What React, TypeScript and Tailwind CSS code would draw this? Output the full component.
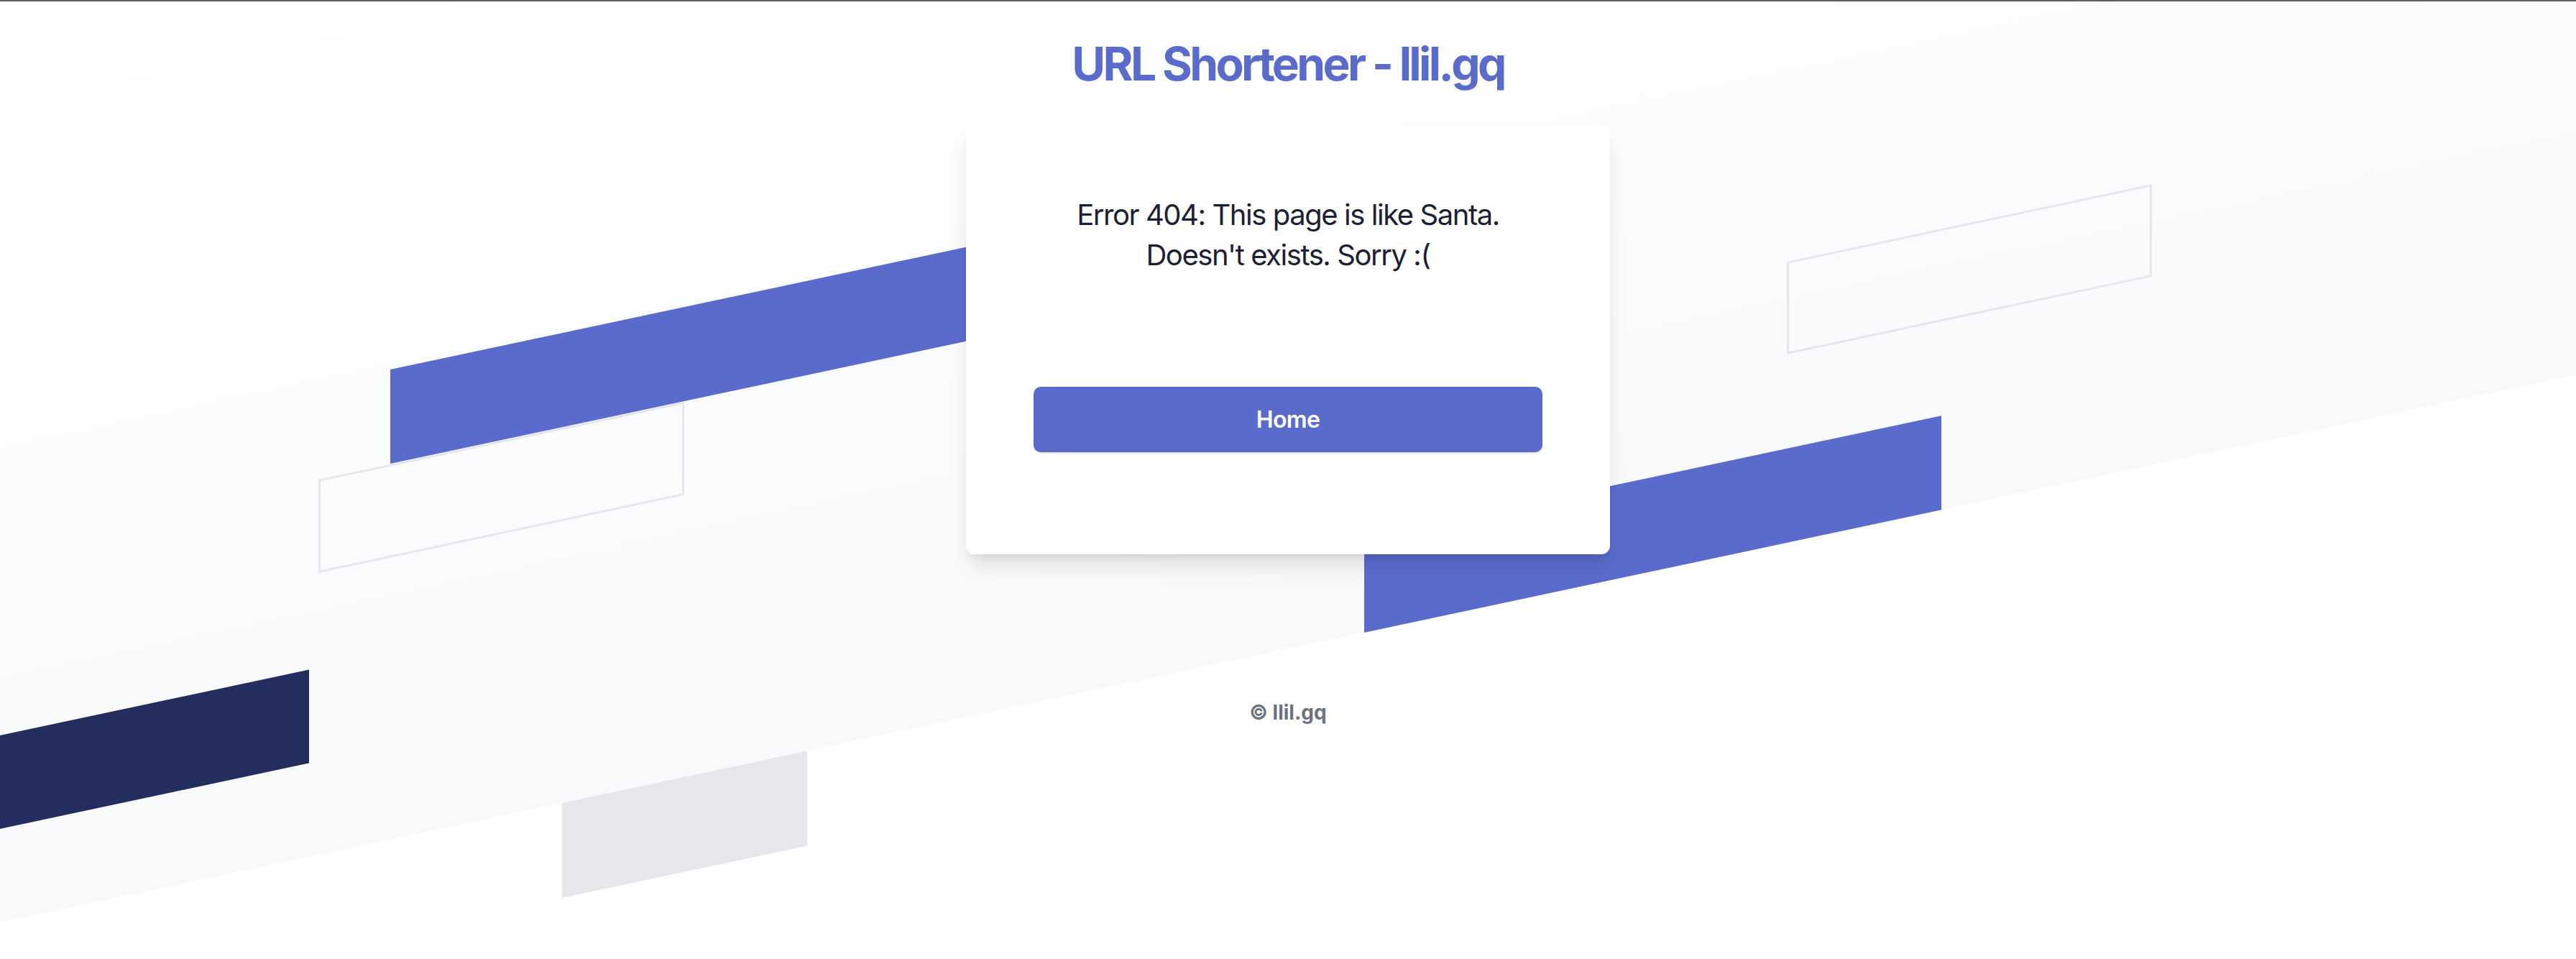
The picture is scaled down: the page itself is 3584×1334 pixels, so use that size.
function Backdrop() {
    return (
        <div className="pointer-events-none absolute inset-0">
            <div className="absolute left-0 top-0 h-[1283px] w-[3584px] origin-top-left -skew-y-12 bg-linear-to-b from-white to-[#f8f9fb]" />
            <div className="absolute left-[443px] top-[667px] h-[130px] w-[509px] origin-top-left -skew-y-12 border-[3px] border-[#e5e7eb]" />
            <div className="absolute left-[2486px] top-[364px] h-[129px] w-[508px] origin-top-left -skew-y-12 border-[3px] border-[#e5e7eb]" />
            <div className="absolute left-[543px] top-[514px] h-[131px] w-[802px] origin-top-left -skew-y-12 bg-[#5a6bcc]" />
            <div className="absolute left-[1898px] top-[749px] h-[131px] w-[803px] origin-top-left -skew-y-12 bg-[#5a6bcc]" />
            <div className="absolute left-[-372px] top-[1102px] h-[130px] w-[802px] origin-top-left -skew-y-12 bg-[#232e5f]" />
            <div className="absolute left-[782px] top-[1117px] h-[132px] w-[341px] origin-top-left -skew-y-12 bg-[#e5e7eb]" />
        </div>
    );
}

function App() {
    return (
        <div
            className="relative h-[1334px] overflow-hidden bg-white"
            style={{ fontFamily: "Inter, 'Noto Sans', sans-serif" }}
        >
            <div className="absolute inset-x-0 top-0 z-20 h-[2px] bg-[#5f5f63]" />
            <Backdrop />

            <main className="relative z-10 flex flex-col items-center pt-[57px]">
                <h1 className="text-[64px] leading-[64px] font-bold tracking-[-0.057em] text-[#5a6bcc]">
                    URL Shortener - llil.gq
                </h1>

                <div className="mt-[53px] flex w-[896px] flex-col rounded-[12px] bg-white px-[94px] pt-[97px] pb-[142px] shadow-[0_20px_30px_-6px_rgba(0,0,0,0.12),0_8px_12px_-8px_rgba(0,0,0,0.1)]">
                    <p className="text-center text-[40px] leading-[56px] tracking-[-0.036em] text-[#1c2033]">
                        Error 404: This page is like Santa.
                        <br />
                        Doesn't exists. Sorry :(
                    </p>
                    <a
                        href="#"
                        className="mt-[155px] flex h-[91px] items-center justify-center rounded-[10px] bg-[#5a6bcc] text-[32px] font-semibold tracking-[-0.02em] text-white shadow-[0_2px_2px_rgba(0,0,0,0.12)]"
                    >
                        Home
                    </a>
                </div>

                <footer className="mt-[200px] text-[28px] leading-[40px] font-bold text-[#6b7280]">
                    © llil.gq
                </footer>
            </main>
        </div>
    );
}

export default App;
